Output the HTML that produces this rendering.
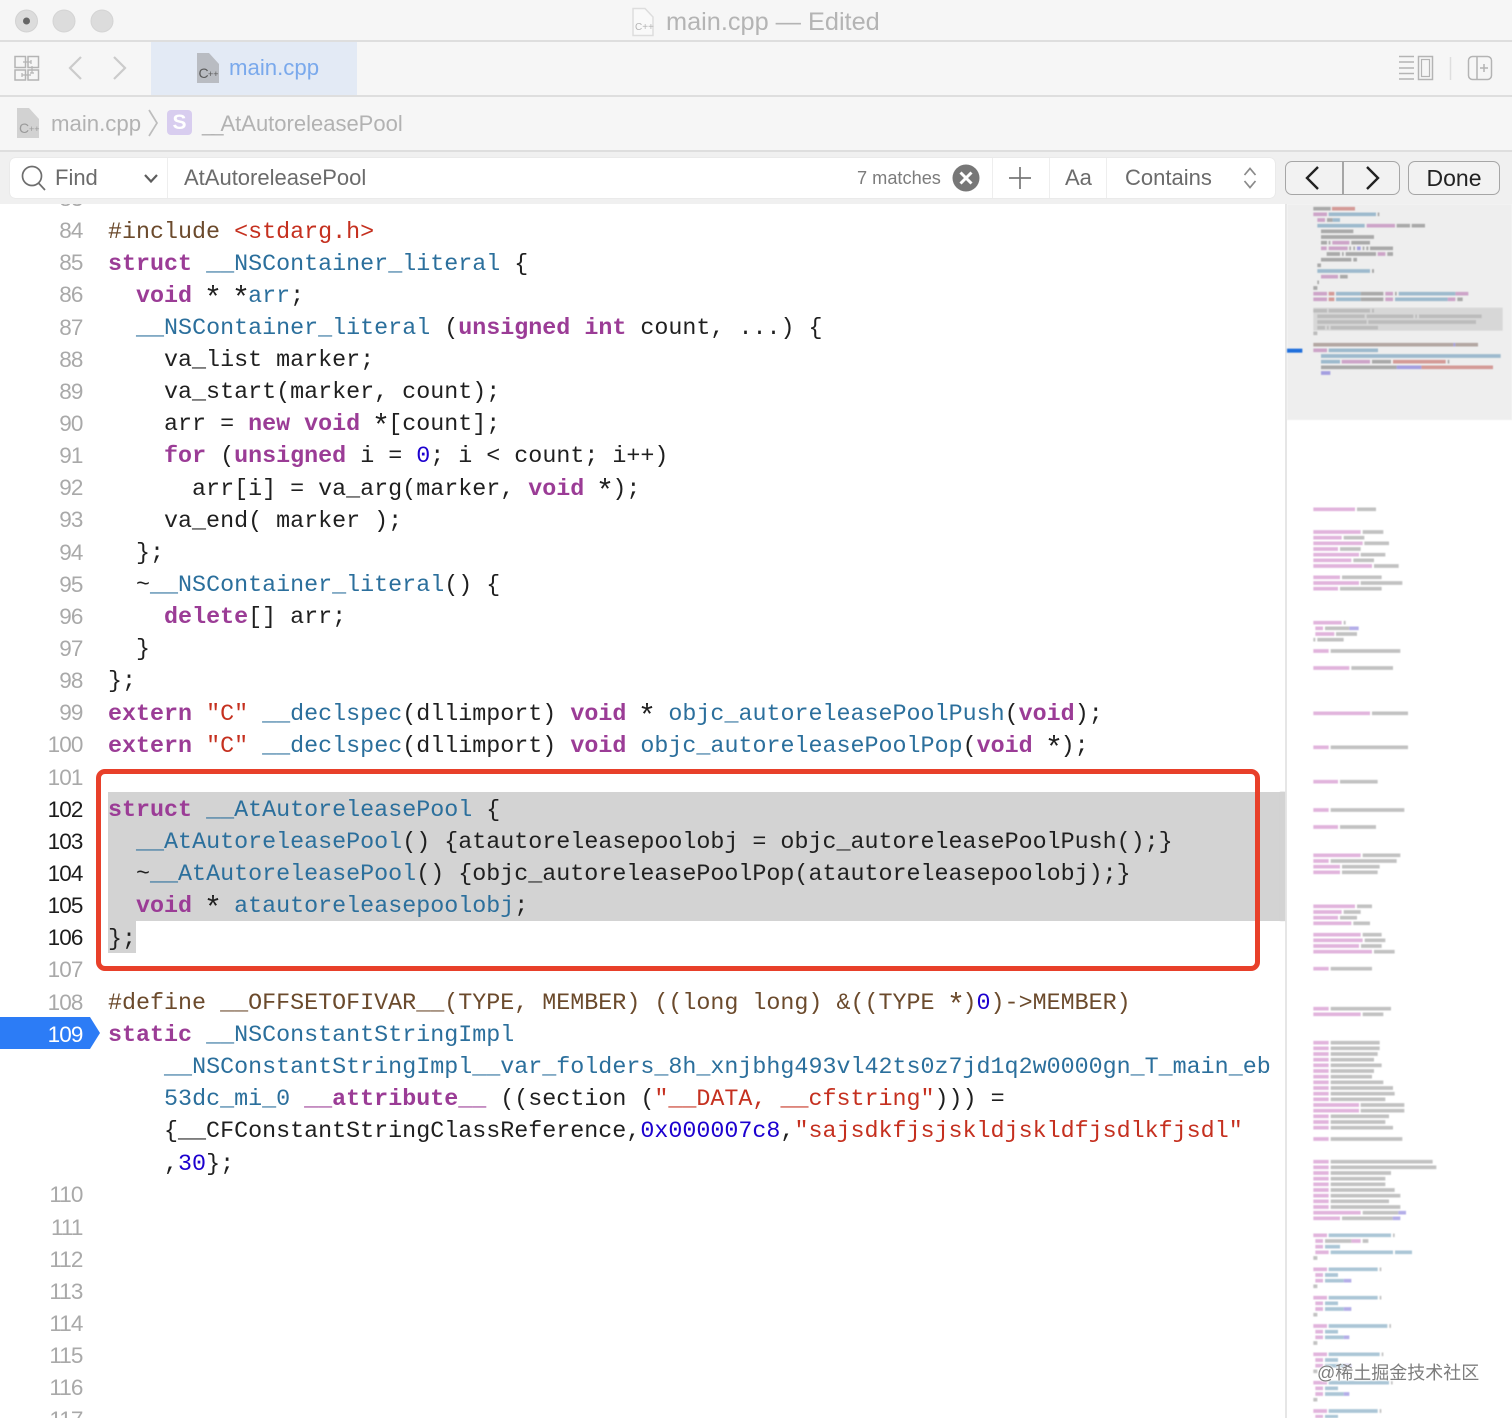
<!DOCTYPE html>
<html><head><meta charset="utf-8"><style>
html,body{margin:0;padding:0;background:#fff;width:1512px;height:1418px;overflow:hidden}
#root{width:1512px;height:1418px;position:relative;overflow:hidden;font-family:"Liberation Sans",sans-serif}
.a{position:absolute}
pre{margin:0;font-family:"Liberation Mono",monospace;font-size:23.35px;line-height:32.14px;color:#1f1f1f}
#code{left:108px;top:216.500px}
#gut{left:0;width:82.500px;top:183px;text-align:right;font-family:"Liberation Sans",sans-serif;font-size:22.5px;letter-spacing:-.9px;color:#a9a9a9}
#gut b{font-weight:normal;color:#1c1c1c}#gut i{font-style:normal;color:#fff}
.k{color:#9b3c96;font-weight:bold}.t{color:#2b6f9c}.n{color:#1c00cf}.s{color:#c5301f}.p{color:#6b4a2c}
.st{display:inline-block;width:14.01px;transform:translateY(3.5px) scale(1.3)}
.bar{left:0;width:1512px;background:#f6f6f6}
.line{left:0;width:1512px;height:2px;background:#dedede}
.ui{white-space:pre;line-height:1}
.us{letter-spacing:-3px}
</style></head><body><div id="root">

<div class="a" style="left:108px;top:792px;width:1177px;height:129px;background:#d3d3d3"></div>
<div class="a" style="left:108px;top:921px;width:28px;height:32px;background:#d3d3d3"></div>
<div class="a" style="left:1285px;top:204px;width:2px;height:1214px;background:#e6e6e6"></div>
<svg class="a" style="left:0;top:1017px" width="100" height="32"><path d="M0 0H90L100 16L90 32H0Z" fill="#2c7cf6"/></svg>

<pre class="a" id="gut">83
84
85
86
87
88
89
90
91
92
93
94
95
96
97
98
99
100
101
<b>102</b>
<b>103</b>
<b>104</b>
<b>105</b>
<b>106</b>
107
108
<i>109</i>




110
111
112
113
114
115
116
117</pre>

<pre class="a" id="code"><span class="p">#include </span><span class="s">&lt;stdarg.h&gt;</span>
<span class="k">struct</span> <span class="t">__NSContainer_literal</span> {
  <span class="k">void</span> <span class="st">*</span> <span class="st">*</span><span class="t">arr</span>;
  <span class="t">__NSContainer_literal</span> (<span class="k">unsigned</span> <span class="k">int</span> count, ...) {
    va_list marker;
    va_start(marker, count);
    arr = <span class="k">new</span> <span class="k">void</span> <span class="st">*</span>[count];
    <span class="k">for</span> (<span class="k">unsigned</span> i = <span class="n">0</span>; i &lt; count; i++)
      arr[i] = va_arg(marker, <span class="k">void</span> <span class="st">*</span>);
    va_end( marker );
  };
  ~<span class="t">__NSContainer_literal</span>() {
    <span class="k">delete</span>[] arr;
  }
};
<span class="k">extern</span> <span class="s">"C"</span> <span class="t">__declspec</span>(dllimport) <span class="k">void</span> <span class="st">*</span> <span class="t">objc_autoreleasePoolPush</span>(<span class="k">void</span>);
<span class="k">extern</span> <span class="s">"C"</span> <span class="t">__declspec</span>(dllimport) <span class="k">void</span> <span class="t">objc_autoreleasePoolPop</span>(<span class="k">void</span> <span class="st">*</span>);

<span class="k">struct</span> <span class="t">__AtAutoreleasePool</span> {
  <span class="t">__AtAutoreleasePool</span>() {atautoreleasepoolobj = objc_autoreleasePoolPush();}
  ~<span class="t">__AtAutoreleasePool</span>() {objc_autoreleasePoolPop(atautoreleasepoolobj);}
  <span class="k">void</span> <span class="st">*</span> <span class="t">atautoreleasepoolobj</span>;
};

<span class="p">#define __OFFSETOFIVAR__(TYPE, MEMBER) ((long long) &amp;((TYPE <span class="st">*</span>)</span><span class="n">0</span><span class="p">)-&gt;MEMBER)</span>
<span class="k">static</span> <span class="t">__NSConstantStringImpl</span>
    <span class="t">__NSConstantStringImpl__var_folders_8h_xnjbhg493vl42ts0z7jd1q2w0000gn_T_main_eb</span>
    <span class="t">53dc_mi_0</span> <span class="k">__attribute__</span> ((section (<span class="s">"__DATA, __cfstring"</span>))) =
    {__CFConstantStringClassReference,<span class="n">0x000007c8</span>,<span class="s">"sajsdkfjsjskldjskldfjsdlkfjsdl"</span>
    ,<span class="n">30</span>};</pre>

<div class="a" style="left:96px;top:769px;width:1154px;height:192px;border:5px solid #e8402a;border-radius:9px"></div>

<svg class="a" style="left:1280px;top:0;filter:blur(.45px)" width="232" height="1418" viewBox="0 0 696 4254" fill="none" stroke-width="11">
<rect x="21" y="612" width="675" height="648" fill="#eeeeee"/>
<g transform="translate(0,600)">
<rect x="100" y="323" width="568" height="69" fill="#d7d7d7"/>
<path stroke="#a9a9a9" d="M100 26H152M141 60H158M350 77H390M395 77H435M123 94H220M123 111H282M123 128H141M146 128H151M214 128H270M208 145H213M220 145H225M248 145H253M259 145H265M270 145H339M140 162H180M186 162H191M197 162H288M322 162H339M123 179H214M220 179H231M112 196H123M180 230H203M112 247H117M100 264H112M242 281H310M242 298H310M293 43H298M345 281H350M532 298H548M276 213H282M123 502H350M276 485H333M503 485H508"/>
<path stroke="#d49a97" d="M156 26H225M146 281H163M146 298H163M339 485H497M424 502H639"/>
<path stroke="#cda4c8" d="M100 43H141M112 60H135M260 77H345M157 128H208M123 145H140M146 145H203M293 162H316M123 230H174M100 281H141M316 281H339M526 281H565M100 298H141M316 298H339M503 298H526M100 451H141M185 485H270"/>
<path stroke="#9dbacd" d="M146 43H288M158 60H180M112 77H254M112 213H270M168 281H242M356 281H526M168 298H242M345 298H503M146 451H294M123 468H662M123 485H180"/>
<path stroke="#a49ee0" d="M231 145H242M350 502H424M123 519H151M520 434H526"/>
<path stroke="#b3a7a2" d="M100 434H520M526 434H594"/>
<path stroke="#bcbcbc" d="M100 332H141M146 332H270M276 332H282M112 349H254M260 349H400M406 349H411M417 349H605M112 366H260M265 366H588M112 383H135M141 383H146M152 383H294M100 400H112"/>
<rect x="21" y="446" width="46" height="12" fill="#1f6fdc"/>
</g>
<g transform="translate(0,1500)">
<rect x="0" y="875" width="15" height="388" fill="#d3d3d3"/>
<path stroke="#e1b4dc" d="M100 28H225M100 96H242M100 113H185M100 130H248M100 147H174M100 164H237M100 181H214M100 198H276M100 232H180M100 249H237M100 266H174M106 385H129M106 402H163M100 453H146M100 504H208M100 640H270M100 742H146M100 845H174M100 930H146M100 981H174M100 1066H242M100 1083H146M100 1100H180M100 1117H180M100 1219H225M100 1236H185M100 1253H174M100 1270H214M100 1304H242M100 1321H248M100 1338H237M100 1355H276M100 1406H146M100 368H185"/>
<path stroke="#c2c2c2" d="M231 28H288M248 96H310M191 113H253M253 130H327M180 147H242M242 164H316M220 181H282M282 198H356M186 232H305M242 249H367M180 266H305M191 368H197M135 385H208M168 402H231M100 419H106M112 419H191M152 453H361M214 504H339M276 640H384M152 742H384M180 845H293M152 930H373M180 981H288M248 1066H361M152 1083H350M186 1100H299M186 1117H293M231 1219H276M191 1236H242M180 1253H231M220 1270H270M248 1304H305M254 1321H316M243 1338H305M282 1355H344M152 1406H276"/>
<path stroke="#b4aee8" d="M208 385H236"/>
</g>
<g transform="translate(0,3000)">
<path stroke="#e1b4dc" d="M100 26H146M100 43H242M100 128H146M100 145H146M100 162H146M100 179H146M100 196H146M100 213H146M100 230H146M100 247H146M100 264H146M100 281H146M100 298H146M100 315H237M100 332H237M100 349H146M100 366H146M100 383H146M100 417H146M100 485H146M100 502H146M100 519H146M100 536H146M100 553H146M100 570H146M100 587H146M100 604H146M100 621H146M100 638H242M100 655H180M100 706H141M106 723H129M214 723H242M106 740H129M106 757H146M100 808H141M106 825H129M106 842H129M100 893H141M106 910H129M106 927H129M100 978H141M106 995H129M106 1012H129M100 1063H141M106 1080H129M106 1097H129M100 1148H141M106 1165H129M106 1182H129M100 1233H141M106 1250H129"/>
<path stroke="#c2c2c2" d="M152 26H333M248 43H310M152 128H299M152 145H299M152 162H293M152 179H282M152 196H305M152 213H282M152 230H276M152 247H310M152 264H339M152 281H344M152 298H316M242 315H373M242 332H373M152 349H327M152 366H316M152 383H339M152 417H367M152 485H458M152 502H469M152 519H333M152 536H316M152 553H316M152 570H344M152 587H361M152 604H327M152 621H361M248 638H355M186 655H338M339 706H344M135 723H214M248 723H265M100 774H112M299 808H304M100 859H112M299 893H304M100 944H112M328 978H333M100 1029H112M305 1063H310M100 1114H112M333 1148H338M100 1199H112M299 1233H304"/>
<path stroke="#abc6d6" d="M146 706H333M135 740H180M152 757H339M345 757H396M146 808H293M135 825H174M135 842H191M146 893H293M135 910H174M135 927H191M146 978H322M135 995H174M135 1012H191M146 1063H299M135 1080H174M135 1097H191M146 1148H327M135 1165H174M135 1182H191M146 1233H293M135 1250H174"/>
<path stroke="#b4aee8" d="M355 638H378M338 655H361M191 842H214M191 927H214M191 1012H208M191 1097H214M191 1182H208"/>
</g>
</svg>

<!-- bars -->
<div class="a bar" style="top:0;height:204px"></div>
<div class="a" style="left:0;top:151px;width:1512px;height:53px;background:#f0f0f0"></div>
<div class="a line" style="top:40px"></div>
<div class="a line" style="top:95px"></div>
<div class="a line" style="top:150px"></div>
<div class="a" style="left:151px;top:42px;width:206px;height:53px;background:#e3eaf5"></div>

<!-- traffic lights -->
<svg class="a" style="left:0;top:0" width="130" height="42">
<circle cx="26.500" cy="21" r="11" fill="#dcdcdc" stroke="#d2d2d2"/><circle cx="26.500" cy="21" r="3.500" fill="#666"/>
<circle cx="64" cy="21" r="11" fill="#dcdcdc" stroke="#d4d4d4"/>
<circle cx="102" cy="21" r="11" fill="#dcdcdc" stroke="#d4d4d4"/>
</svg>

<!-- title -->
<svg class="a" style="left:630px;top:7px" width="26" height="30" fill="none"><path d="M3 1.500H15L23 10V28.500H3Z" fill="#f9f9f9" stroke="#dddddd" stroke-width="1.500"/><text x="5" y="23" font-family="Liberation Sans" font-size="10" fill="#b5b5b5">C++</text></svg>
<div class="a ui" style="left:666px;top:10px;font-size:25.3px;color:#b4b4b4">main.cpp — Edited</div>

<!-- toolbar icons -->
<svg class="a" style="left:0;top:42px" width="140" height="53" fill="none" stroke="#b4b4b4" stroke-width="1.500">
<path d="M15 14.500H25.500V25.500H15ZM28 14.500H38.500V25.500H28ZM15 28H25.500V38H15ZM28 28H38.500V38H28Z"/>
<path d="M23 20H31M31 18V22M22 33H31M22 31V35M32 24V31M30 31H34" stroke-width="1.200"/>
<path d="M81 15L70 26L81 37" stroke="#cbcbcb" stroke-width="2.200"/>
<path d="M114 15L125 26L114 37" stroke="#cbcbcb" stroke-width="2.200"/>
</svg>
<svg class="a" style="left:195px;top:52px" width="26" height="32"><path d="M2 1H14L24 12V31H2Z" fill="#b9bcc2"/><text x="3.500" y="26" font-family="Liberation Sans" font-size="14" fill="#5a5a5a">C</text><text x="13" y="25" font-family="Liberation Sans" font-size="9" fill="#5a5a5a">++</text></svg>
<div class="a ui" style="left:229px;top:57px;font-size:22.2px;color:#7aa9ec">main.cpp</div>

<svg class="a" style="left:1390px;top:50px" width="110" height="36" fill="none" stroke="#b4b4b4" stroke-width="1.500">
<path d="M9 6.500H24M9 12H24M9 18H24M9 23.500H24M9 29H24"/>
<rect x="28.500" y="6.500" width="14" height="23" stroke-width="1.500"/><rect x="31.500" y="9.500" width="8" height="17" stroke-width="1.200"/>
<path d="M60.500 7V30" stroke="#dedede"/>
<rect x="78.500" y="6.500" width="23" height="23" rx="4"/><path d="M87 7V30"/><path d="M90 18H98M94 14V22"/>
</svg>

<!-- jump bar -->
<svg class="a" style="left:15px;top:107px" width="26" height="32"><path d="M2 1H14L24 12V31H2Z" fill="#d2d2d2"/><text x="4" y="26" font-family="Liberation Sans" font-size="14" fill="#9a9a9a">C</text><text x="14" y="25" font-family="Liberation Sans" font-size="9" fill="#9a9a9a">++</text></svg>
<div class="a ui" style="left:51px;top:113px;font-size:22.2px;color:#b2b2b2">main.cpp</div>
<svg class="a" style="left:146px;top:108px" width="14" height="30" fill="none"><path d="M3 2L11 15L3 28" stroke="#bdbdbd" stroke-width="1.700"/></svg>
<div class="a" style="left:167px;top:110px;width:25px;height:25px;background:#d8cdef;border-radius:4px;color:#fff;font-weight:bold;font-size:21px;line-height:25px;text-align:center">S</div>
<div class="a ui" style="left:202px;top:113px;font-size:22px;color:#b2b2b2"><span class="us">__</span>AtAutoreleasePool</div>

<!-- find bar -->
<div class="a" style="left:10px;top:158px;width:1265px;height:40px;background:#fff;border-radius:5px;box-shadow:0 0 1px #c8c8c8"></div>
<div class="a" style="left:167px;top:158px;width:1px;height:40px;background:#eee"></div>
<div class="a" style="left:992px;top:158px;width:1px;height:40px;background:#eee"></div>
<div class="a" style="left:1049px;top:158px;width:1px;height:40px;background:#eee"></div>
<div class="a" style="left:1106px;top:158px;width:1px;height:40px;background:#eee"></div>
<svg class="a" style="left:18px;top:164px" width="30" height="30" fill="none" stroke="#6e6e6e" stroke-width="1.700"><circle cx="14" cy="12" r="9.500"/><path d="M20.500 19L27 26"/></svg>
<div class="a ui" style="left:55px;top:167px;font-size:22px;color:#6b6b6b">Find</div>
<svg class="a" style="left:142px;top:172px" width="18" height="14" fill="none" stroke="#5d5d5d" stroke-width="2.200"><path d="M3 3L9 9.500L15 3"/></svg>
<div class="a ui" style="left:184px;top:167px;font-size:22px;color:#6b6b6b">AtAutoreleasePool</div>
<div class="a ui" style="left:857px;top:169px;font-size:18.2px;color:#7c7c7c">7 matches</div>
<svg class="a" style="left:952px;top:164px" width="28" height="28" fill="none"><circle cx="14" cy="14" r="13.500" fill="#777"/><path d="M8.500 8.500L19.500 19.500M19.500 8.500L8.500 19.500" stroke="#fff" stroke-width="3"/></svg>
<svg class="a" style="left:1008px;top:166px" width="24" height="24" fill="none" stroke="#777" stroke-width="1.700"><path d="M12 1V23M1 12H23"/></svg>
<div class="a ui" style="left:1065px;top:167px;font-size:22px;color:#6b6b6b">Aa</div>
<div class="a ui" style="left:1125px;top:167px;font-size:22px;color:#6b6b6b">Contains</div>
<svg class="a" style="left:1241px;top:166px" width="18" height="24" fill="none" stroke="#8a8a8a" stroke-width="1.700"><path d="M3.500 9L9 2.500L14.500 9M3.500 15L9 21.500L14.500 15"/></svg>

<div class="a" style="left:1285px;top:161px;width:113px;height:32px;border:1.500px solid #a6a6a6;border-radius:7px;background:#f2f2f2"></div>
<div class="a" style="left:1342px;top:161px;width:1.500px;height:34px;background:#a6a6a6"></div>
<svg class="a" style="left:1300px;top:163px" width="90" height="30" fill="none" stroke="#222" stroke-width="2.400"><path d="M18 4L7 15L18 26M67 4L78 15L67 26"/></svg>
<div class="a" style="left:1408px;top:161px;width:90px;height:32px;border:1.500px solid #a6a6a6;border-radius:7px;background:#f2f2f2;color:#222;font-size:23px;line-height:32px;text-align:center">Done</div>

<!-- watermark -->
<div class="a ui" style="left:1317px;top:1364px;font-family:'Liberation Sans','Noto Sans CJK SC',sans-serif;font-size:18px;color:#7d7d7d;text-shadow:0 0 2px #fff,0 0 2px #fff">@稀土掘金技术社区</div>
</div></body></html>
